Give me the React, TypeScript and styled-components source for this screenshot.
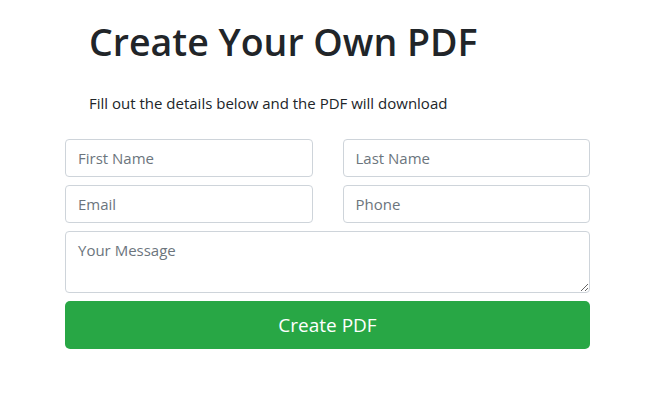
import styled, { createGlobalStyle } from "styled-components";

const GlobalStyle = createGlobalStyle`
  body {
    margin: 0;
    background: #fff;
    font-family: "Open Sans", "Noto Sans", sans-serif;
    color: #212529;
  }
`;

const Page = styled.div`
  width: 525px;
  margin: 0 0 0 65px;
  padding-top: 19px;
`;

const Header = styled.div`
  padding-left: 24px;
`;

const Title = styled.h1`
  margin: 0 0 27px;
  font-size: 37.5px;
  font-weight: 600;
  line-height: 1.2;
  color: #212529;
`;

const Lead = styled.p`
  margin: 0 0 24px;
  font-size: 15px;
  line-height: 24px;
`;

const Form = styled.form`
  display: flex;
  flex-direction: column;
  gap: 8px;
`;

const Row = styled.div`
  display: grid;
  grid-template-columns: 1fr 1fr;
  column-gap: 30px;
`;

const fieldBase = `
  box-sizing: border-box;
  width: 100%;
  padding: 6px 12px;
  font-family: "Open Sans", "Noto Sans", sans-serif;
  font-size: 15px;
  line-height: 24px;
  color: #495057;
  background: #fff;
  border: 1px solid #ced4da;
  border-radius: 4px;
  outline: none;
  &::placeholder {
    color: #6c757d;
  }
`;

const Input = styled.input`
  ${fieldBase}
  height: 38px;
`;

const TextArea = styled.textarea`
  ${fieldBase}
  display: block;
  height: 62px;
`;

const SubmitButton = styled.button`
  height: 48px;
  width: 100%;
  border: none;
  border-radius: 5px;
  background: #28a745;
  color: #fff;
  font-family: "Open Sans", "Noto Sans", sans-serif;
  font-size: 19px;
  cursor: pointer;
`;

const App = () => {
  return (
    <>
      <GlobalStyle />
      <Page>
        <Header>
          <Title>Create Your Own PDF</Title>
          <Lead>Fill out the details below and the PDF will download</Lead>
        </Header>
        <Form onSubmit={(e) => e.preventDefault()}>
          <Row>
            <Input type="text" name="firstName" placeholder="First Name" />
            <Input type="text" name="lastName" placeholder="Last Name" />
          </Row>
          <Row>
            <Input type="email" name="email" placeholder="Email" />
            <Input type="text" name="phone" placeholder="Phone" />
          </Row>
          <TextArea name="message" placeholder="Your Message" />
          <SubmitButton type="submit">Create PDF</SubmitButton>
        </Form>
      </Page>
    </>
  );
};

export default App;
